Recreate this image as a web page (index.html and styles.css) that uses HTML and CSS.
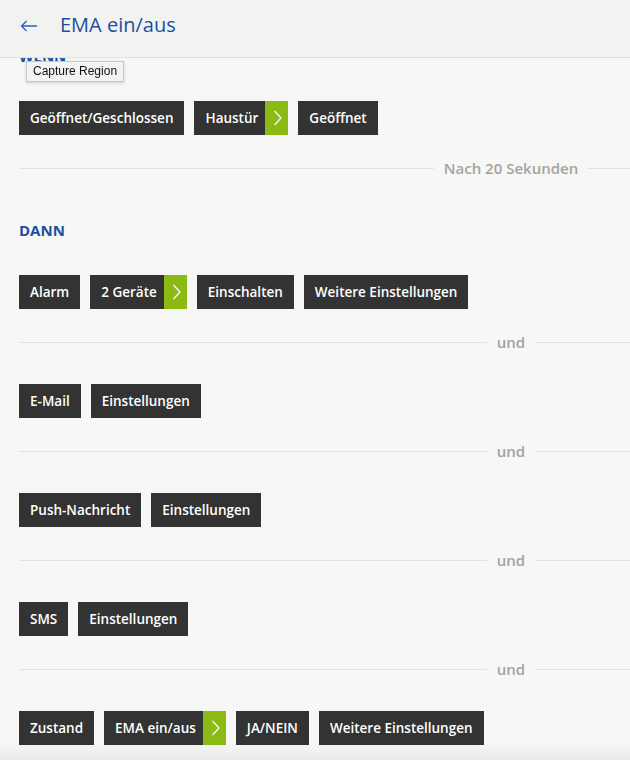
FILE: index.html
```html
<!DOCTYPE html>
<html lang="de">
<head>
<meta charset="utf-8">
<title>EMA ein/aus</title>
<link rel="stylesheet" href="styles.css">
</head>
<body>
<header class="topbar">
  <svg class="back" width="18" height="14" viewBox="0 0 18 14" aria-hidden="true">
    <path d="M17 7 H1.5 M6.5 2 L1.5 7 L6.5 12" fill="none" stroke="#2a62b8" stroke-width="1.3"/>
  </svg>
  <h1 class="title">EMA ein/aus</h1>
</header>

<main class="content">
  <h2 class="label label-first">WENN</h2>
  <div class="row">
    <span class="chip">Geöffnet/Geschlossen</span>
    <span class="chip chip-split"><span class="chip-text">Haustür</span><span class="chip-go"><svg width="23" height="34" viewBox="0 0 23 34"><path d="M9.5 10 L16 17 L9.5 24" fill="none" stroke="#fff" stroke-width="1.2"/></svg></span></span>
    <span class="chip">Geöffnet</span>
  </div>
  <div class="sep"><span class="sep-text">Nach 20 Sekunden</span></div>

  <h2 class="label label-then">DANN</h2>
  <div class="row">
    <span class="chip">Alarm</span>
    <span class="chip chip-split"><span class="chip-text">2 Geräte</span><span class="chip-go"><svg width="23" height="34" viewBox="0 0 23 34"><path d="M9.5 10 L16 17 L9.5 24" fill="none" stroke="#fff" stroke-width="1.2"/></svg></span></span>
    <span class="chip">Einschalten</span>
    <span class="chip">Weitere Einstellungen</span>
  </div>
  <div class="sep"><span class="sep-text">und</span></div>
  <div class="row">
    <span class="chip">E-Mail</span>
    <span class="chip">Einstellungen</span>
  </div>
  <div class="sep"><span class="sep-text">und</span></div>
  <div class="row">
    <span class="chip">Push-Nachricht</span>
    <span class="chip">Einstellungen</span>
  </div>
  <div class="sep"><span class="sep-text">und</span></div>
  <div class="row">
    <span class="chip">SMS</span>
    <span class="chip">Einstellungen</span>
  </div>
  <div class="sep"><span class="sep-text">und</span></div>
  <div class="row">
    <span class="chip">Zustand</span>
    <span class="chip chip-split"><span class="chip-text">EMA ein/aus</span><span class="chip-go"><svg width="23" height="34" viewBox="0 0 23 34"><path d="M9.5 10 L16 17 L9.5 24" fill="none" stroke="#fff" stroke-width="1.2"/></svg></span></span>
    <span class="chip">JA/NEIN</span>
    <span class="chip">Weitere Einstellungen</span>
  </div>
</main>

<div class="tooltip">Capture Region</div>
<div class="bottom-fade"></div>
</body>
</html>
```

FILE: styles.css
```css
html, body {
  margin: 0;
  padding: 0;
}
body {
  background: #f7f7f5;
  font-family: "Open Sans", "Liberation Sans", sans-serif;
  overflow: hidden;
  width: 630px;
  height: 760px;
  position: relative;
}
.topbar {
  position: fixed;
  top: 0;
  left: 0;
  width: 630px;
  height: 58px;
  background: #f2f2f1;
  border-bottom: 1px solid #e1e1e1;
  display: flex;
  align-items: flex-start;
  padding-top: 11px;
  box-sizing: border-box;
  z-index: 5;
}
.back {
  margin-left: 20px;
  margin-top: 8px;
}
.title {
  margin: 0 0 0 22px;
  font-size: 20px;
  font-weight: 400;
  color: #1b4fa0;
  line-height: 28px;
}
.content {
  width: 984px;
  padding: 46px 0 0 19px;
}
.label {
  margin: 0;
  font-size: 15px;
  font-weight: 700;
  line-height: 20px;
  color: #1b4fa0;
}
.label-then {
  margin-top: 42px;
}
.row {
  display: flex;
  gap: 10px;
  margin-top: 34px;
}
.label + .row {
  margin-top: 35px;
}
.sep + .row {
  margin-top: 32px;
}
.chip {
  display: flex;
  align-items: center;
  height: 34px;
  padding: 0 11px;
  background: #333333;
  color: #ffffff;
  font-size: 13.5px;
  font-weight: 600;
  white-space: nowrap;
}
.chip-split {
  padding-right: 0;
}
.chip-text {
  padding-right: 7px;
}
.chip-go {
  width: 23px;
  height: 34px;
  background: #8aba13;
  display: block;
}
.chip-go svg {
  display: block;
}
.sep {
  display: flex;
  align-items: center;
  gap: 10px;
  height: 20px;
  margin-top: 23px;
}
.sep::before,
.sep::after {
  content: "";
  flex: 1;
  height: 1px;
  background: #e3e3e1;
}
.sep-text {
  font-size: 15px;
  font-weight: 600;
  color: #a3a3a3;
  line-height: 20px;
}
.tooltip {
  position: absolute;
  left: 26px;
  top: 61px;
  height: 21px;
  box-sizing: border-box;
  padding: 0 6px;
  background: #f3f3f3;
  border: 1px solid #c9c9c9;
  box-shadow: 0 1px 3px rgba(0,0,0,0.18);
  font-family: "Liberation Sans", Arial, sans-serif;
  font-size: 12px;
  line-height: 19px;
  color: #111;
  z-index: 6;
}
.bottom-fade {
  position: fixed;
  left: 0;
  bottom: 0;
  width: 630px;
  height: 18px;
  background: linear-gradient(to bottom, rgba(0,0,0,0), rgba(0,0,0,0.05));
  z-index: 4;
}
```
